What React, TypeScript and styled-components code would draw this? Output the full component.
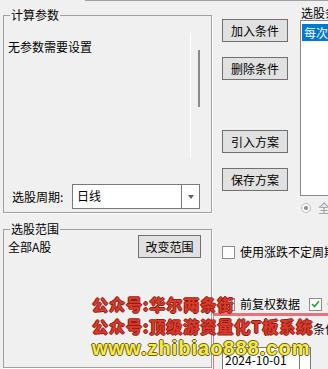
import styled, { createGlobalStyle } from "styled-components";

const GlobalStyle = createGlobalStyle`
  html, body {
    margin: 0;
    padding: 0;
    background: #f0f0f0;
  }
  body {
    font-family: "Noto Sans CJK SC", "Noto Sans", sans-serif;
    font-size: 12px;
    line-height: 16px;
    color: #000;
  }
`;

const Window = styled.div`
  position: relative;
  width: 328px;
  height: 369px;
  overflow: hidden;
  background: #f0f0f0;
`;

const TopRule = styled.div`
  height: 1px;
  margin-left: 85px;
  background: #a0a0a0;
`;

const Body = styled.div`
  display: grid;
  grid-template-columns: 212px 1fr;
`;

const LeftCol = styled.div`
  display: flex;
  flex-direction: column;
  padding-left: 3px;
`;

const Group = styled.div<{ $mt: number; $h: number }>`
  position: relative;
  box-sizing: border-box;
  margin-top: ${(p) => p.$mt}px;
  height: ${(p) => p.$h}px;
  border: 1px solid #a0a0a0;
  box-shadow: 1px 1px 0 #fff;
  display: flex;
  flex-direction: column;
`;

const Legend = styled.span`
  position: absolute;
  top: -9px;
  left: 6px;
  padding: 0 1px;
  background: #f0f0f0;
`;

const ParamBody = styled.div`
  display: flex;
  padding: 17px 11px 0 4px;
`;

const ParamText = styled.div`
  flex: 1;
  margin-top: 6px;
`;

const Ghost = styled.div<{ $w: number; $mt: number; $h: number; $c: string }>`
  width: ${(p) => p.$w}px;
  margin-top: ${(p) => p.$mt}px;
  height: ${(p) => p.$h}px;
  background: ${(p) => p.$c};
  & + & {
    margin-left: 7px;
  }
`;

const PeriodRow = styled.div`
  margin-top: auto;
  margin-bottom: 3px;
  display: flex;
  align-items: center;
  padding: 0 11px 0 8px;
`;

const Combo = styled.div`
  margin-left: auto;
  box-sizing: border-box;
  width: 128px;
  height: 25px;
  display: flex;
  border: 1px solid #7a7a7a;
  background: #fff;
`;

const ComboText = styled.div`
  flex: 1;
  padding: 3px 0 0 4px;
`;

const ComboButton = styled.div`
  width: 17px;
  border-left: 1px solid #7a7a7a;
  display: flex;
  align-items: center;
  justify-content: center;
  &::after {
    content: "";
    border-left: 3px solid transparent;
    border-right: 3px solid transparent;
    border-top: 4px solid #606060;
  }
`;

const RangeRow = styled.div`
  display: flex;
  justify-content: space-between;
  align-items: flex-start;
  padding: 5px 10px 0 4px;
`;

const RangeText = styled.div`
  margin-top: 4px;
`;

const Button = styled.div<{ $mt?: number }>`
  box-sizing: border-box;
  width: ${(p) => (p.$mt === undefined ? 63 : 66)}px;
  height: 23px;
  margin-top: ${(p) => p.$mt ?? 0}px;
  border: 1px solid #707070;
  background: #e1e1e1;
  display: flex;
  align-items: center;
  justify-content: center;
`;

const RightCol = styled.div`
  display: flex;
  flex-direction: column;
`;

const TopRow = styled.div`
  display: flex;
  height: 195px;
`;

const ButtonCol = styled.div`
  display: flex;
  flex-direction: column;
  padding: 18px 0 0 10px;
`;

const ListCol = styled.div`
  display: flex;
  flex-direction: column;
  margin-left: 12px;
  padding-top: 4px;
`;

const ListLabel = styled.div`
  line-height: 15px;
  padding-left: 1px;
  white-space: nowrap;
`;

const ListBox = styled.div`
  box-sizing: border-box;
  width: 60px;
  height: 176px;
  border: 1px solid #828790;
  background: #fff;
  padding: 3px 0 0 1px;
`;

const ListItem = styled.div<{ $selected?: boolean }>`
  height: 17px;
  padding-left: 2px;
  white-space: nowrap;
  line-height: 17px;
  color: ${(p) => (p.$selected ? "#fff" : "#000")};
  background: ${(p) => (p.$selected ? "#0078d7" : "transparent")};
`;

const RadioRow = styled.div`
  display: flex;
  align-items: center;
  margin: 6px 0 0 89px;
  height: 11px;
  color: #9a9a9a;
  white-space: nowrap;
`;

const Radio = styled.div`
  box-sizing: border-box;
  width: 10px;
  height: 10px;
  border-radius: 50%;
  border: 1px solid #b8b8b8;
  background: #fff;
  display: flex;
  align-items: center;
  justify-content: center;
  margin-right: 7px;
  &::after {
    content: "";
    width: 4px;
    height: 4px;
    border-radius: 50%;
    background: #8a8a8a;
  }
`;

const CheckRow = styled.div<{ $mt: number }>`
  display: flex;
  align-items: center;
  height: 16px;
  margin: ${(p) => p.$mt}px 0 0 10px;
  white-space: nowrap;
`;

const Box = styled.div<{ $ml?: number }>`
  box-sizing: border-box;
  flex: none;
  width: 13px;
  height: 13px;
  margin-left: ${(p) => p.$ml ?? 0}px;
  margin-right: 5px;
  border: 1px solid #8c8c8c;
  background: #fdfdfd;
  display: flex;
  align-items: center;
  justify-content: center;
`;

const Frame = styled.div`
  margin: 1px 0 0 -1px;
  height: 60px;
  border-top: 3px solid #e8727c;
  border-left: 3px solid #e8727c;
`;

const FrameText = styled.div`
  margin: 5px 0 0 99px;
  white-space: nowrap;
`;

const DateBox = styled.div`
  box-sizing: border-box;
  display: flex;
  width: 89px;
  height: 24px;
  margin: 10px 0 0 8px;
  border: 1px solid #7a7a7a;
  background: #fff;
`;

const DateText = styled.div`
  flex: 1;
  padding: 4px 0 0 2px;
`;

const DateButton = styled.div`
  width: 10px;
  border-left: 1px solid #7a7a7a;
`;

const Watermark = styled.div`
  position: absolute;
  left: 92px;
  top: 293px;
  pointer-events: none;
`;

const MarkLine = styled.div<{ $fill: string; $edge: string; $latin?: boolean }>`
  white-space: nowrap;
  font-family: ${(p) =>
    p.$latin
      ? `"Liberation Sans", Arial, sans-serif`
      : `"Noto Sans CJK SC", sans-serif`};
  font-weight: 700;
  font-size: ${(p) => (p.$latin ? 20 : 16)}px;
  line-height: 22px;
  letter-spacing: 1px;
  color: ${(p) => p.$fill};
  text-shadow: 1px 0 ${(p) => p.$edge}, -1px 0 ${(p) => p.$edge},
    0 1px ${(p) => p.$edge}, 0 -1px ${(p) => p.$edge};
`;

const Check = () => (
  <svg width="9" height="8" viewBox="0 0 9 8">
    <path d="M1 4 L3.5 6.5 L8 1.2" fill="none" stroke="#2f9e2f" strokeWidth="1.6" />
  </svg>
);

export default function App() {
  return (
    <>
      <GlobalStyle />
      <Window>
        <TopRule />
        <Body>
          <LeftCol>
            <Group $mt={14} $h={198}>
              <Legend>计算参数</Legend>
              <ParamBody>
                <ParamText>无参数需要设置</ParamText>
                <Ghost $w={1} $mt={0} $h={125} $c="#ffffff" />
                <Ghost $w={2} $mt={17} $h={57} $c="#8a8a8a" />
              </ParamBody>
              <PeriodRow>
                <span>选股周期:</span>
                <Combo>
                  <ComboText>日线</ComboText>
                  <ComboButton />
                </Combo>
              </PeriodRow>
            </Group>
            <Group $mt={16} $h={139}>
              <Legend>选股范围</Legend>
              <RangeRow>
                <RangeText>全部A股</RangeText>
                <Button>改变范围</Button>
              </RangeRow>
            </Group>
          </LeftCol>
          <RightCol>
            <TopRow>
              <ButtonCol>
                <Button $mt={0}>加入条件</Button>
                <Button $mt={15}>删除条件</Button>
                <Button $mt={50}>引入方案</Button>
                <Button $mt={15}>保存方案</Button>
              </ButtonCol>
              <ListCol>
                <ListLabel>选股条件列表</ListLabel>
                <ListBox>
                  <ListItem $selected>每次选股条件</ListItem>
                </ListBox>
              </ListCol>
            </TopRow>
            <RadioRow>
              <Radio />
              全部
            </RadioRow>
            <CheckRow $mt={31}>
              <Box />
              使用涨跌不定周期
            </CheckRow>
            <CheckRow $mt={36}>
              <Box />
              前复权数据
              <Box $ml={9}>
                <Check />
              </Box>
              条件
            </CheckRow>
            <Frame>
              <FrameText>条件选股</FrameText>
              <DateBox>
                <DateText>2024-10-01</DateText>
                <DateButton />
              </DateBox>
            </Frame>
          </RightCol>
        </Body>
        <Watermark>
          <MarkLine $fill="#dc3b2b" $edge="#8e1d12">公众号:华尔两条街</MarkLine>
          <MarkLine $fill="#dc3b2b" $edge="#8e1d12">公众号:顶级游资量化T板系统</MarkLine>
          <MarkLine $fill="#f4ea48" $edge="#6e5f16" $latin>
            www.zhibiao888.com
          </MarkLine>
        </Watermark>
      </Window>
    </>
  );
}
